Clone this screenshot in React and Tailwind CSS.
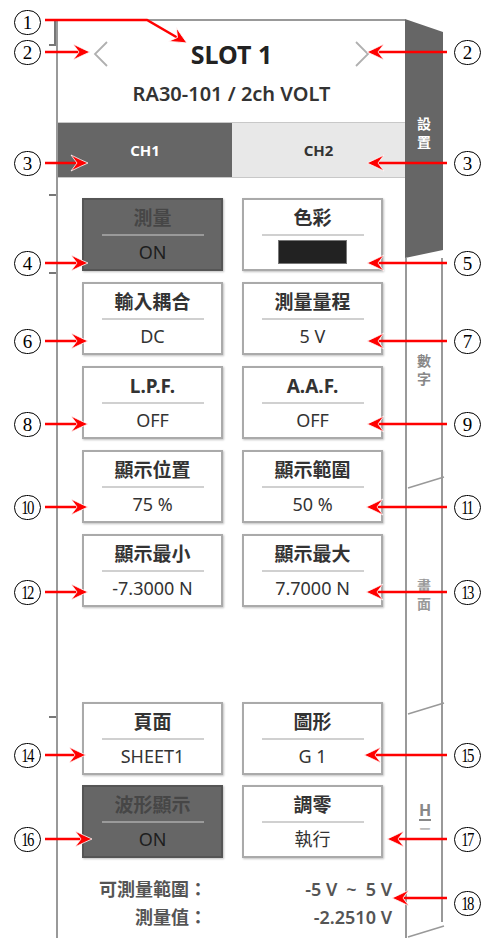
import React from 'react'

const FONT = "font-['Noto_Sans','Noto_Sans_CJK_TC',sans-serif]"

function Btn({ title, value, dark, swatch }) {
  return (
    <div className={`h-[73px] border-2 flex flex-col items-center shadow-[1px_1px_2px_rgba(0,0,0,0.25)] ${dark ? 'bg-[#666] border-[#555]' : 'bg-white border-[#aaa]'}`}>
      <div className={`pt-[6px] text-[19px] leading-[24px] font-bold ${dark ? 'text-[#464646]' : 'text-[#333]'}`}>{title}</div>
      <div className={`mt-[4px] h-[2px] w-[102px] ${dark ? 'bg-[#9a9a9a]' : 'bg-[#d0d0d0]'}`} />
      {swatch ? (
        <div className="mt-[4px] w-[69px] h-[24px] bg-[#222] border border-[#777]" />
      ) : (
        <div className={`mt-[4px] text-[18px] leading-[24px] ${dark ? 'text-[#1e1e1e]' : 'text-[#333]'}`}>{value}</div>
      )}
    </div>
  )
}

function Circled({ n, x, y }) {
  const two = n >= 10
  return (
    <div
      className="absolute w-[27px] h-[25px] rounded-full border border-black bg-white flex items-center justify-center font-['Liberation_Serif',serif] text-black"
      style={{ left: x - 13, top: y - 12 }}
    >
      <span className={two ? 'text-[18px] leading-none tracking-[-2px] scale-x-[0.82] -ml-[2px]' : 'text-[19px] leading-none'}>{n}</span>
    </div>
  )
}

function Head({ x, y, a }) {
  return (
    <path
      transform={`translate(${x} ${y}) rotate(${a})`}
      d="M0 0 Q-7 -3 -17 -8 L-11 0 L-17 8 Q-7 3 0 0 Z"
      fill="#ff0000"
      stroke="#fff"
      strokeWidth="0.8"
    />
  )
}

const LEFT = [
  [2, 52, 90],
  [3, 163, 88],
  [4, 263, 88],
  [6, 341, 88],
  [8, 424, 88],
  [10, 507, 88],
  [12, 592, 88],
  [14, 755, 86],
  [16, 839, 92],
]
const RIGHT = [
  [2, 52, 367, 52],
  [3, 163, 367, 163],
  [5, 263, 367, 263],
  [7, 341, 367, 341],
  [9, 424, 367, 424],
  [11, 507, 366, 507],
  [13, 592, 366, 592],
  [15, 755, 364, 755],
  [17, 839, 387, 839],
  [18, 898, 392, 903],
]

function Annotations() {
  return (
    <>
      <svg className="absolute inset-0 pointer-events-none" width="489" height="938">
        {/* frame ticks */}
        <g stroke="#777" strokeWidth="2">
          <line x1="55" y1="19" x2="55" y2="45" />
          <line x1="49" y1="45" x2="56" y2="45" />
          <line x1="49" y1="195" x2="56" y2="195" />
          <line x1="49" y1="273" x2="56" y2="273" />
          <line x1="49" y1="717" x2="56" y2="717" />
        </g>
        <g stroke="#ff0000" strokeWidth="2.5" fill="none">
          <polyline points="45,20 147,20 178,38" />
          {LEFT.map(([n, y, t]) => (
            <line key={'l' + n} x1="45" y1={y} x2={t - 10} y2={y} />
          ))}
          {RIGHT.map(([n, y, t]) => (
            <line key={'r' + n} x1="447" y1={y} x2={t + 10} y2={y} />
          ))}
        </g>
        <Head x={187} y={43} a={30} />
        {LEFT.map(([n, y, t]) => (
          <Head key={'hl' + n} x={t} y={y} a={0} />
        ))}
        {RIGHT.map(([n, y, t]) => (
          <Head key={'hr' + n} x={t} y={y} a={180} />
        ))}
      </svg>
      <Circled n={1} x={27} y={22} />
      {LEFT.map(([n, y]) => (
        <Circled key={'cl' + n} n={n} x={27} y={y} />
      ))}
      {RIGHT.map(([n, , , cy]) => (
        <Circled key={'cr' + n} n={n} x={467} y={cy} />
      ))}
    </>
  )
}

function Chevron({ dir }) {
  return (
    <svg width="16" height="26" viewBox="0 0 16 26">
      <polyline
        points={dir === 'left' ? '14,1 2,13 14,25' : '2,1 14,13 2,25'}
        fill="none"
        stroke="#b0b0b0"
        strokeWidth="1.8"
      />
    </svg>
  )
}

function Sep({ top }) {
  return (
    <svg className="absolute left-0 w-[38px] h-[16px]" style={{ top }} viewBox="0 0 38 16">
      <polyline points="1,14 37,3" fill="none" stroke="#999" strokeWidth="1.5" />
    </svg>
  )
}

function TabStrip() {
  return (
    <div className="w-[38px] shrink-0 flex flex-col">
      <div className="h-[239px] bg-[#666] [clip-path:polygon(0_0,100%_13px,100%_calc(100%-8px),0_100%)] flex justify-center pt-[96px]">
        <div className="text-white text-[14px] leading-[18px] font-bold flex flex-col items-center">
          <span className="block h-[18px]">設</span>
          <span className="block h-[18px]">置</span>
        </div>
      </div>
      <div className="h-[224px] border-x-2 border-[#999] flex items-center justify-center">
        <div className="text-[#888] text-[14px] leading-[18px] font-bold flex flex-col items-center">
          <span className="block h-[18px]">數</span>
          <span className="block h-[18px]">字</span>
        </div>
      </div>
      <div className="relative h-[226px] border-x-2 border-[#999] flex items-center justify-center">
        <Sep top={-8} />
        <div className="text-[#999] text-[14px] leading-[18px] font-bold flex flex-col items-center">
          <span className="block h-[18px]">畫</span>
          <span className="block h-[18px]">面</span>
        </div>
      </div>
      <div className="relative flex-1 border-l-2 border-[#999] flex items-center justify-center">
        <Sep top={-8} />
        <div className="absolute right-0 top-0 h-[214px] w-[2px] bg-[#999]" />
        <Sep top={215} />
        <div className="text-[#888] font-bold flex flex-col items-center mb-[8px]">
          <span className="block h-[20px] text-[16px] leading-[18px] border-b-2 border-[#888]">H</span>
          <span className="block h-[14px] text-[12px] leading-[14px] mt-[2px] text-[#bbb]">ー</span>
        </div>
      </div>
    </div>
  )
}

export default function App() {
  return (
    <div className={`relative w-[489px] h-[938px] bg-white overflow-hidden ${FONT}`}>
      <div className="flex pt-[19px] h-full">
        <div className="w-[56px] shrink-0" />
        <div className="w-[349px] shrink-0 border-l-2 border-t-2 border-[#999] flex flex-col">
          {/* header */}
          <div className="h-[102px] border-b border-[#c8c8c8] flex flex-col">
            <div className="flex items-center justify-between pl-[35px] pr-[35px] pt-[18px]">
              <Chevron dir="left" />
              <div className="text-[25px] leading-[30px] font-bold text-[#222]">SLOT 1</div>
              <Chevron dir="right" />
            </div>
            <div className="mt-[11px] text-center text-[20px] leading-[28px] font-semibold text-[#333]">RA30-101 / 2ch VOLT</div>
          </div>
          {/* channel tabs */}
          <div className="flex h-[55px] border-b border-[#c8c8c8]">
            <div className="w-[174px] bg-[#666] flex items-center justify-center text-white text-[15px] font-bold">CH1</div>
            <div className="flex-1 bg-[#e8e8e8] flex items-center justify-center text-[#333] text-[15px] font-bold">CH2</div>
          </div>
          {/* settings */}
          <div className="pl-[24px] pt-[20px]">
            <div className="grid grid-cols-[141px_141px] gap-x-[19px] gap-y-[11px]">
              <Btn title="測量" value="ON" dark />
              <Btn title="色彩" swatch />
              <Btn title="輸入耦合" value="DC" />
              <Btn title="測量量程" value="5 V" />
              <Btn title="L.P.F." value="OFF" />
              <Btn title="A.A.F." value="OFF" />
              <Btn title="顯示位置" value="75 %" />
              <Btn title="顯示範圍" value="50 %" />
              <Btn title="顯示最小" value="-7.3000 N" />
              <Btn title="顯示最大" value="7.7000 N" />
            </div>
            <div className="mt-[95px] grid grid-cols-[141px_141px] gap-x-[19px] gap-y-[10px]">
              <Btn title="頁面" value="SHEET1" />
              <Btn title="圖形" value="G 1" />
              <Btn title="波形顯示" value="ON" dark />
              <Btn title="調零" value="執行" />
            </div>
            <div className="mt-[17px] text-[18px] leading-[28px] font-semibold text-[#555]">
              <div className="flex">
                <div className="w-[125px] text-right">可測量範圍：</div>
                <div className="w-[185px] text-right">-5 V&ensp;~&ensp;5 V</div>
              </div>
              <div className="flex">
                <div className="w-[125px] text-right">測量值：</div>
                <div className="w-[185px] text-right">-2.2510 V</div>
              </div>
            </div>
          </div>
        </div>
        <TabStrip />
      </div>
      <Annotations />
    </div>
  )
}
